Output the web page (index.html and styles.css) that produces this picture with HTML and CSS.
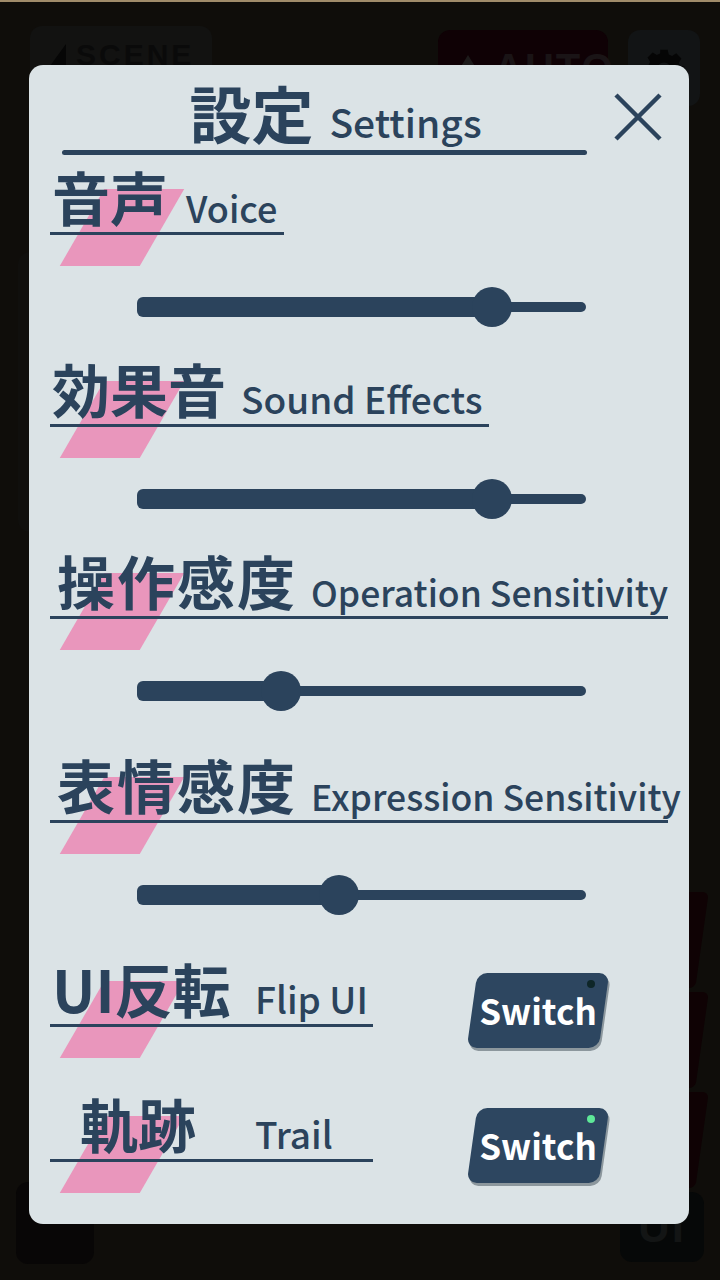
FILE: index.html
```html
<!DOCTYPE html>
<html lang="ja">
<head>
  <meta charset="UTF-8"/>
  <meta name="viewport" content="width=720, initial-scale=1.0"/>
  <title>設定</title>
  <link rel="stylesheet" href="styles.css">
</head>
<body>

  <!-- game HUD, dimmed behind the settings sheet -->
  <div class="hud">
    <div class="hud-btn hud-scene"><span class="hud-arrow"></span>SCENE</div>
    <div class="hud-btn hud-auto"><span class="hud-tri"></span>AUTO</div>
    <div class="hud-btn hud-gear">
      <svg width="44" height="44" viewBox="0 0 24 24"><path fill="#050505" d="M10 2h4l.6 2.6 1.8.8 2.3-1.4 2.8 2.8-1.4 2.3.8 1.8L23 11v4l-2.6.6-.8 1.8 1.4 2.3-2.8 2.8-2.3-1.4-1.8.8L14 23h-4l-.6-2.6-1.8-.8-2.3 1.4-2.8-2.8 1.4-2.3-.8-1.8L1 15v-4l2.6-.6.8-1.8-1.4-2.3 2.8-2.8 2.3 1.4 1.8-.8zM12 9a4 4 0 100 8 4 4 0 000-8z"/></svg>
    </div>
    <div class="hud-side"><span>Feeling</span></div>
    <div class="hud-tab hud-tab1"></div>
    <div class="hud-tab hud-tab2"></div>
    <div class="hud-tab hud-tab3"></div>
    <div class="hud-btn hud-ui">UI</div>
    <div class="hud-btn hud-corner"></div>
  </div>

  <main class="sheet">
    <header class="sheet-head">
      <h1 class="sheet-title"><span class="jp">設定</span><span class="en">Settings</span></h1>
      <button class="close" aria-label="閉じる">
        <svg width="50" height="48" viewBox="0 0 50 48"><path d="M3 2L47 46M47 2L3 46" stroke="#2b435c" stroke-width="4.5" fill="none"/></svg>
      </button>
    </header>

    <section class="opt">
      <div class="opt-label opt-label--voice"><span class="mark"></span><span class="jp">音声</span><span class="en">Voice</span></div>
      <div class="slider"><div class="fill" style="width:79%"></div><div class="knob" style="left:79%"></div></div>
    </section>

    <section class="opt">
      <div class="opt-label opt-label--sound"><span class="mark"></span><span class="jp">効果音</span><span class="en">Sound Effects</span></div>
      <div class="slider"><div class="fill" style="width:79%"></div><div class="knob" style="left:79%"></div></div>
    </section>

    <section class="opt">
      <div class="opt-label opt-label--wide"><span class="mark"></span><span class="jp">操作感度</span><span class="en">Operation Sensitivity</span></div>
      <div class="slider"><div class="fill" style="width:32%"></div><div class="knob" style="left:32%"></div></div>
    </section>

    <section class="opt opt--loose">
      <div class="opt-label opt-label--wide"><span class="mark"></span><span class="jp">表情感度</span><span class="en">Expression Sensitivity</span></div>
      <div class="slider"><div class="fill" style="width:45%"></div><div class="knob" style="left:45%"></div></div>
    </section>

    <section class="opt opt-toggle opt--loose">
      <div class="opt-label opt-label--short"><span class="mark"></span><span class="jp">UI反転</span><span class="en">Flip UI</span></div>
      <button class="switch"><span>Switch</span><i class="lamp"></i></button>
    </section>

    <section class="opt opt-toggle opt--after-toggle">
      <div class="opt-label opt-label--short opt-label--trail"><span class="mark"></span><span class="jp">軌跡</span><span class="en">Trail</span></div>
      <button class="switch is-on"><span>Switch</span><i class="lamp"></i></button>
    </section>
  </main>

</body>
</html>
```

FILE: styles.css
```css
/* base */
* { margin:0; padding:0; box-sizing:border-box; }
html, body { width:100%; height:100%; overflow:hidden; }
body {
  position:relative;
  background:#0f0d0a;
  border-top:2px solid #a08b6a;
  padding:63px 31px 0 29px;
  font-family:"Noto Sans CJK JP", "Noto Sans", sans-serif;
  color:#2b435c;
}
button { font:inherit; border:0; background:none; color:inherit; cursor:pointer; }

/* dimmed HUD layer */
.hud { position:absolute; inset:0; z-index:0; }
.hud-btn {
  position:absolute;
  display:flex; align-items:center; gap:10px;
  border-radius:12px;
  font-family:"Liberation Sans", sans-serif;
  font-weight:700; font-size:40px; line-height:1; letter-spacing:2px;
}
.hud-scene {
  left:30px; top:24px; width:182px; height:80px;
  background:#121211; color:#0a0a0a;
  align-items:flex-start; padding:14px 0 0 20px;
  font-size:30px; letter-spacing:3px;
}
.hud-arrow { margin-top:4px; width:0; height:0; border-top:22px solid transparent; border-right:16px solid #060606; border-bottom:22px solid transparent; }
.hud-auto { left:438px; top:28px; width:170px; height:76px; background:#0f0105; color:#1a1416; padding-left:14px; }
.hud-tri { width:0; height:0; border-left:16px solid transparent; border-right:16px solid transparent; border-bottom:26px solid #1d1a1a; }
.hud-gear { left:628px; top:28px; width:72px; height:76px; background:#121415; justify-content:center; }
.hud-side {
  position:absolute; left:18px; top:250px; width:66px; height:280px;
  border-radius:12px; background:#100f0d;
  display:flex; align-items:center; justify-content:center;
}
.hud-side span {
  transform:rotate(-90deg);
  font-family:"Liberation Sans", sans-serif; font-weight:700; font-size:40px; color:#060606;
}
.hud-tab { position:absolute; right:18px; width:80px; height:96px; background:#0f0204; transform:skewX(-8deg); border-radius:6px; }
.hud-tab1 { top:890px; }
.hud-tab2 { top:990px; }
.hud-tab3 { top:1090px; }
.hud-ui { left:620px; top:1190px; width:84px; height:70px; background:#060808; color:#131515; justify-content:center; font-size:44px; }
.hud-corner { left:16px; top:1180px; width:78px; height:82px; background:#080606; }

/* settings sheet */
.sheet {
  position:relative; z-index:1;
  width:660px; height:1159px;
  background:#dbe3e6;
  border-radius:14px;
  padding:0 21px;
  display:flex; flex-direction:column;
}

.sheet-head { display:flex; align-items:flex-start; padding-left:12px; }
.sheet-title {
  position:relative;
  width:525px; height:90px;
  display:flex; align-items:flex-end; justify-content:center;
  padding:0 0 12px 22px; gap:16px;
  font-weight:700;
}
.sheet-title::after {
  content:''; position:absolute; left:0; right:0; bottom:0;
  height:5px; border-radius:3px; background:#2b435c;
}
.sheet-title .jp { font-size:62px; line-height:1; }
.sheet-title .en { font-size:39px; line-height:1; font-weight:500; padding-bottom:2px; }
.close { margin:28px 0 0 26px; display:block; width:50px; height:48px; }
.close svg { display:block; }

/* one setting: label + control */
.opt { display:flex; flex-direction:column; }
.opt--loose { margin-top:12px; }
.opt--after-toggle { margin-top:34px; }
.opt-toggle { flex-direction:row; align-items:flex-start; }

.opt-label {
  position:relative;
  flex-shrink:0;
  height:80px;
  display:flex; align-items:flex-end;
  padding:0 0 10px 2px;
  white-space:nowrap;
}
.opt-label::after {
  content:''; position:absolute; left:0; right:0; bottom:0;
  height:3px; background:#2b435c;
}
.opt-label--voice { width:234px; }
.opt-label--sound { width:439px; }
.opt-label--wide  { width:618px; padding-left:7px; }
.opt-label--short { width:323px; }

.opt-label .jp {
  position:relative; flex-shrink:0;
  font-size:58px; line-height:1; font-weight:700;
}
.opt-label .en {
  position:relative; flex-shrink:0;
  margin-left:15px;
  font-size:37px; line-height:1; font-weight:500;
}
.opt-label--voice .en { margin-left:18px; font-size:36px; }
.opt-label--wide .jp { letter-spacing:2px; }
.opt-label--wide .en { font-size:35.5px; margin-left:14px; }
.opt-label--short .jp { min-width:203px; }
.opt-label--short .en { margin-left:0; }
.opt-label--trail .jp { padding-left:28px; }

/* pink slash under each heading */
.mark {
  position:absolute; left:32px; bottom:-31px;
  width:80px; height:77px;
  background:#e996bc;
  transform:skewX(-30deg);
}

/* slider */
.slider {
  position:relative;
  width:449px; height:112px;
  margin-left:87px;
}
.slider::before {
  content:''; position:absolute; left:0; right:0; top:67px;
  height:10px; border-radius:5px; background:#2b435c;
}
.slider .fill {
  position:absolute; left:0; top:62px;
  height:20px; border-radius:6px; background:#2b435c;
}
.slider .knob {
  position:absolute; top:52px;
  width:40px; height:40px; margin-left:-20px;
  border-radius:50%; background:#2b435c;
}

/* switch button */
.switch {
  position:relative; flex-shrink:0;
  margin:26px 0 0 99px;
  width:132px; height:75px;
  display:flex; align-items:center; justify-content:center;
  color:#fff; font-weight:700; font-size:35px;
}
.switch::before {
  content:''; position:absolute; inset:0;
  background:#2d4660; border-radius:10px;
  transform:skewX(-8deg);
  box-shadow:2px 3px 0 #8c979d;
}
.switch span { position:relative; top:-1px; }
.switch .lamp {
  position:absolute; top:7px; right:9px;
  width:8px; height:8px; border-radius:50%;
  background:#0e2628;
}
.switch.is-on .lamp { background:#5ee898; }
```
